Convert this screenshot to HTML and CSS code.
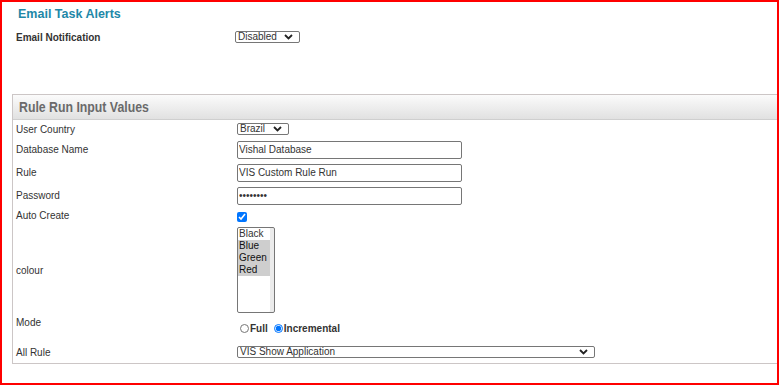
FILE: index.html
```html
<!DOCTYPE html>
<html lang="en">
<head>
    <meta charset="UTF-8">
    <meta name="viewport" content="width=device-width, initial-scale=1.0">
    <title>Email Task Alerts</title>
    <link rel="stylesheet" href="styles.css">
</head>
<body>
    <div class="page">
        <h2 class="alerts-title">Email Task Alerts</h2>
        <div class="notify-row">
            <label class="notify-label" for="notify">Email Notification</label>
            <span class="dd-wrap">
                <select id="notify" class="dropdown dd-disabled">
                    <option>Disabled</option>
                    <option>Enabled</option>
                </select>
                <svg class="chev" width="9" height="6" viewBox="0 0 9 6"><path d="M1 1l3.5 3.5L8 1" fill="none" stroke="#222" stroke-width="1.8"/></svg>
            </span>
        </div>

        <div class="panel">
            <div class="panel-head"><span class="panel-title">Rule Run Input Values</span></div>
            <table class="fields">
                <tr class="row-sm">
                    <td class="lbl">User Country</td>
                    <td>
                        <span class="dd-wrap">
                            <select class="dropdown dd-country">
                                <option>Brazil</option>
                                <option>India</option>
                                <option>USA</option>
                            </select>
                            <svg class="chev" width="9" height="6" viewBox="0 0 9 6"><path d="M1 1l3.5 3.5L8 1" fill="none" stroke="#222" stroke-width="1.8"/></svg>
                        </span>
                    </td>
                </tr>
                <tr class="row-in">
                    <td class="lbl">Database Name</td>
                    <td><input class="text-in" type="text" value="Vishal Database"></td>
                </tr>
                <tr class="row-in">
                    <td class="lbl">Rule</td>
                    <td><input class="text-in" type="text" value="VIS Custom Rule Run"></td>
                </tr>
                <tr class="row-in">
                    <td class="lbl">Password</td>
                    <td><input class="text-in" type="password" value="12345678"></td>
                </tr>
                <tr class="row-check">
                    <td class="lbl">Auto Create</td>
                    <td><input class="check" type="checkbox" checked></td>
                </tr>
                <tr class="row-list">
                    <td class="lbl">colour</td>
                    <td>
                        <select class="listbox" multiple>
                            <option>Black</option>
                            <option selected>Blue</option>
                            <option selected>Green</option>
                            <option selected>Red</option>
                        </select>
                    </td>
                </tr>
                <tr class="row-mode">
                    <td class="lbl lbl-top">Mode</td>
                    <td>
                        <span class="radios">
                            <input type="radio" name="mode" id="m-full"><label for="m-full">Full</label>
                            <input type="radio" name="mode" id="m-inc" checked><label for="m-inc">Incremental</label>
                        </span>
                    </td>
                </tr>
                <tr class="row-last">
                    <td class="lbl">All Rule</td>
                    <td>
                        <span class="dd-wrap">
                            <select class="dropdown dd-rule">
                                <option>VIS Show Application</option>
                                <option>VIS Custom Rule Run</option>
                            </select>
                            <svg class="chev" width="9" height="6" viewBox="0 0 9 6"><path d="M1 1l3.5 3.5L8 1" fill="none" stroke="#222" stroke-width="1.8"/></svg>
                        </span>
                    </td>
                </tr>
            </table>
        </div>
    </div>
</body>
</html>
```

FILE: styles.css
```css
html, body {
    margin: 0;
    padding: 0;
    background: #fff;
}

body {
    font-family: "Liberation Sans", Arial, sans-serif;
    color: #333;
}

.page {
    box-sizing: border-box;
    width: 779px;
    height: 385px;
    border: 2px solid #ff0000;
    overflow: hidden;
}

.alerts-title {
    margin: 5px 0 0 16px;
    font-size: 12.5px;
    line-height: 15px;
    font-weight: bold;
    color: #1e88a8;
}

.notify-row {
    display: flex;
    align-items: center;
    height: 14px;
    margin-top: 8px;
    padding-left: 14px;
}

.notify-label {
    width: 219px;
    font-size: 10px;
    font-weight: bold;
}

/* selects */
.dd-wrap {
    position: relative;
    display: inline-block;
    vertical-align: middle;
}

.dropdown {
    -webkit-appearance: none;
    appearance: none;
    display: block;
    box-sizing: border-box;
    height: 12px;
    margin: 0;
    padding: 0 0 0 2px;
    font: 10px/10px "Liberation Sans", Arial, sans-serif;
    color: #333;
    border: 1px solid #767676;
    border-radius: 2px;
    background: #fff;
}

.chev {
    position: absolute;
    right: 7px;
    top: 3px;
    pointer-events: none;
}

.dd-disabled { width: 65px; }
.dd-country { width: 52px; }
.dd-rule { width: 358px; }

/* panel */
.panel {
    margin: 50px 0 0 10px;
    width: calc(100% + 20px);
    border: 1px solid #ccc6c6;
}

.panel-head {
    height: 24px;
    line-height: 24px;
    padding-left: 6px;
    border-bottom: 1px solid #cfcfcf;
    background: linear-gradient(#fbfbfb, #e1e1e1);
}

.panel-title {
    display: inline-block;
    transform: scaleX(0.82);
    transform-origin: left center;
    font-size: 15px;
    font-weight: bold;
    color: #6a6a6a;
}

.fields {
    border-collapse: collapse;
    border-spacing: 0;
}

.fields td {
    padding: 0;
    vertical-align: middle;
    font-size: 10px;
}

.fields td.lbl {
    width: 221px;
    padding-left: 3px;
}

.fields td.lbl-top {
    vertical-align: top;
    padding-top: 1px;
}

.row-sm td { height: 18px; }
.row-in td { height: 23px; }
.row-check td { height: 17px; }
.row-list td { height: 92px; }
.row-mode td { height: 24px; }
.row-last td { height: 22px; }

.text-in {
    box-sizing: border-box;
    display: block;
    width: 225px;
    height: 18px;
    padding: 0 1px;
    font: 10px "Liberation Sans", Arial, sans-serif;
    color: #333;
    border: 1px solid #767676;
    border-radius: 2px;
}

.check {
    display: block;
    width: 10px;
    height: 10px;
    margin: 2px 0 0 0;
}

.listbox {
    box-sizing: border-box;
    display: block;
    width: 38px;
    height: 86px;
    padding: 0 4px 0 0;
    font: 10px "Liberation Sans", Arial, sans-serif;
    color: #333;
    border: 1px solid #767676;
    border-radius: 2px;
    box-shadow: inset -4px 0 0 #ebebeb;
    overflow: hidden;
}

.listbox option {
    padding: 0 1px;
    line-height: 12px;
}

.radios {
    display: flex;
    align-items: center;
    font-size: 10px;
    font-weight: bold;
}

.radios input {
    width: 9px;
    height: 9px;
    margin: 0 1px 0 3px;
}

.radios label {
    margin-right: 3px;
}
```
